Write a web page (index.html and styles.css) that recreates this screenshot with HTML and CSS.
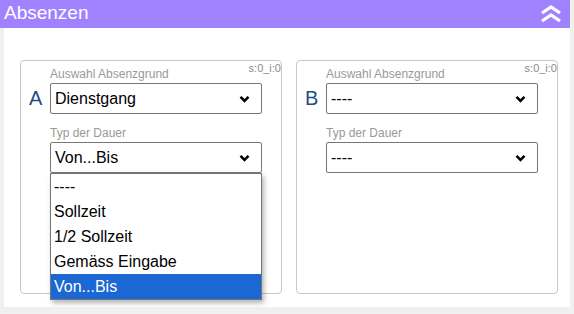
FILE: index.html
```html
<html>
<head>
<meta charset="UTF-8">
<title>Absenzen</title>
<link rel="stylesheet" href="styles.css">
</head>
<body>
<div class="page">
<div class="head">
<span class="title">Absenzen</span>
<svg class="collapse" width="24" height="20" viewBox="0 0 24 20">
<polyline points="3,9 12,3 21,9" />
<polyline points="3,17 12,11 21,17" />
</svg>
</div>
<div class="panel">

<div class="box">
<span class="stat">s:0_i:0</span>
<div class="letter">A</div>
<div class="fields">
<label class="lbl">Auswahl Absenzgrund</label>
<select class="sel">
<option>----</option>
<option selected>Dienstgang</option>
</select>
<label class="lbl lbl2">Typ der Dauer</label>
<div class="dropwrap">
<select class="sel">
<option>----</option>
<option selected>Von...Bis</option>
</select>
<ul class="droplist">
<li>----</li>
<li>Sollzeit</li>
<li>1/2 Sollzeit</li>
<li>Gemäss Eingabe</li>
<li class="hi">Von...Bis</li>
</ul>
</div>
</div>
</div>

<div class="box">
<span class="stat">s:0_i:0</span>
<div class="letter">B</div>
<div class="fields">
<label class="lbl">Auswahl Absenzgrund</label>
<select class="sel">
<option selected>----</option>
</select>
<label class="lbl lbl2">Typ der Dauer</label>
<select class="sel">
<option selected>----</option>
</select>
</div>
</div>

</div>
</div>
</body>
</html>
```
FILE: styles.css
```css
html, body{
    margin:0;
    padding:0;
    background:#f0f0f0;
    font-family:"Liberation Sans", Arial, sans-serif;
}
.page{
    width:570px;
}
.head{
    height:28px;
    background:#a082ff;
    display:flex;
    align-items:center;
    justify-content:space-between;
    padding:0 7px 0 4px;
}
.title{
    color:#fff;
    font-size:19px;
    line-height:28px;
    margin-top:-2px;
}
.collapse polyline{
    fill:none;
    stroke:#fff;
    stroke-width:3.2;
    stroke-linecap:butt;
    stroke-linejoin:miter;
}
.panel{
    margin-left:4px;
    background:#fff;
    height:279px;
    box-sizing:border-box;
    padding:32px 12px 0 16px;
    display:flex;
    gap:14px;
}
.box{
    position:relative;
    width:262px;
    height:234px;
    box-sizing:border-box;
    border:1px solid #c8c8c8;
    border-radius:4px;
    display:flex;
    padding:6px 0 0 6px;
}
.stat{
    position:absolute;
    right:0;
    top:1px;
    font-size:11px;
    color:#8a8a8a;
}
.letter{
    width:23px;
    font-size:20px;
    color:#1d4f80;
    padding-top:20px;
    padding-left:2px;
    box-sizing:border-box;
}
.fields{
    display:flex;
    flex-direction:column;
    width:212px;
}
.lbl{
    font-size:12px;
    line-height:14px;
    color:#999;
    margin-bottom:2px;
}
.lbl2{
    margin-top:12px;
}
.sel{
    -webkit-appearance:none;
    appearance:none;
    width:212px;
    height:31px;
    font-family:"Liberation Sans", Arial, sans-serif;
    font-size:16px;
    color:#000;
    background:#fff url("data:image/svg+xml;utf8,<svg xmlns='http://www.w3.org/2000/svg' width='11' height='8' viewBox='0 0 11 8'><polyline points='1.5,1.8 5.5,5.8 9.5,1.8' fill='none' stroke='black' stroke-width='2.6'/></svg>") no-repeat right 11px center;
    border:1px solid #767676;
    border-radius:2px;
    padding:0 4px;
}
.dropwrap{
    position:relative;
}
.dropwrap .sel{
    display:block;
}
.droplist{
    position:absolute;
    left:0;
    top:31px;
    width:212px;
    box-sizing:border-box;
    margin:0;
    padding:0;
    list-style:none;
    background:#fff;
    border:1px solid #767676;
    box-shadow:2px 3px 5px rgba(0,0,0,0.3);
}
.droplist li{
    height:25px;
    line-height:25px;
    padding-left:3px;
    font-size:16px;
    color:#000;
}
.droplist .hi{
    background:#1b67d3;
    color:#fff;
}
```
